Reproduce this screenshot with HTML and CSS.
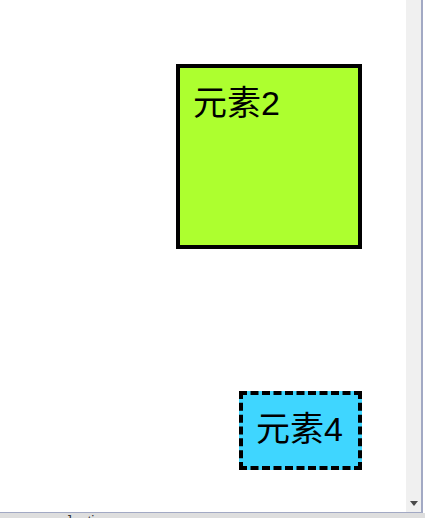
FILE: index.html
```html
<!DOCTYPE html>
<html lang="zh">
<head>
<meta charset="utf-8">
<link rel="stylesheet" href="styles.css">
</head>
<body>
<div class="page">
  <div class="frame">
    <div class="content">
      <div class="box box2">元素2</div>
      <div class="box box4">元素4</div>
    </div>
    <div class="scrollbar">
      <span class="arrow"></span>
    </div>
  </div>
  <div class="edge"></div>
</div>
<div class="below">
  <span class="frag">]&nbsp;&nbsp;&nbsp;&nbsp;ti&nbsp;&nbsp;&nbsp;.</span>
</div>
</body>
</html>
```
FILE: styles.css
```css
html, body {
  margin: 0;
  padding: 0;
  background: #ffffff;
  overflow: hidden;
}
body {
  width: 425px;
  height: 518px;
  font-family: "Liberation Sans", "Noto Sans CJK SC", sans-serif;
}
.page {
  display: flex;
  height: 513px;
}
.frame {
  display: flex;
  width: 421px;
  height: 512px;
  border-right: 2px solid #a2a9c4;
  border-bottom: 1px solid #a2a9c4;
}
.content {
  flex: 1;
  display: flex;
  flex-direction: column;
  align-items: flex-end;
  padding-right: 44px;
  background: #ffffff;
}
.box {
  box-sizing: border-box;
  color: #000;
  font-size: 34px;
  line-height: 38px;
}
.box2 {
  margin-top: 64px;
  width: 186px;
  height: 185px;
  border: 4px solid #000;
  background: #adff2f;
  padding: 16px 0 0 13px;
}
.box4 {
  margin-top: 142px;
  width: 123px;
  height: 79px;
  border: 4px dashed #000;
  background: #3fd6ff;
  padding: 15px 0 0 13px;
}
.scrollbar {
  width: 15px;
  background: #f0f0f0;
  display: flex;
  align-items: flex-end;
  justify-content: center;
}
.arrow {
  width: 0;
  height: 0;
  border-left: 4px solid transparent;
  border-right: 4px solid transparent;
  border-top: 5px solid #4a4a4a;
  margin-bottom: 6px;
  margin-left: 1px;
}
.edge {
  flex: 1;
  background: #ffffff;
}
.below {
  height: 5px;
  background: #dedede;
  overflow: hidden;
  padding-left: 68px;
}
.frag {
  display: block;
  font-size: 14px;
  line-height: 14px;
  color: #333;
  margin-top: 1px;
  white-space: pre;
}
```
